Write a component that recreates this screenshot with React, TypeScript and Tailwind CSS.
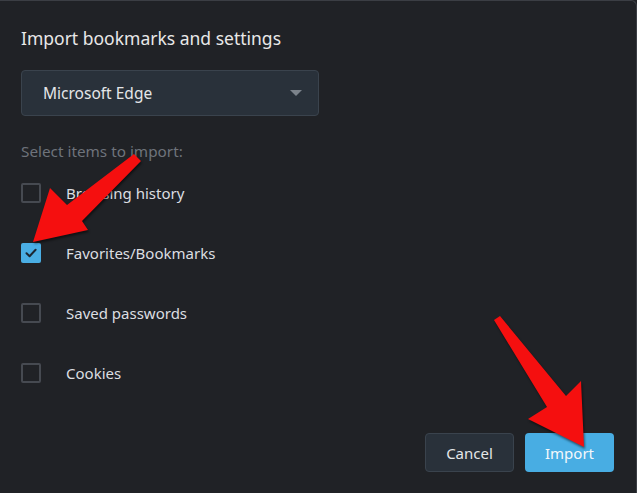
import React from "react";

const items = [
  { label: "Browsing history", checked: false },
  { label: "Favorites/Bookmarks", checked: true },
  { label: "Saved passwords", checked: false },
  { label: "Cookies", checked: false },
];

function Checkbox({ checked }: { checked: boolean }) {
  if (checked) {
    return (
      <div className="w-[20px] h-[20px] rounded-[2px] bg-[#4aaee4] flex items-center justify-center">
        <svg width="14" height="14" viewBox="0 0 14 14">
          <path d="M2.5 7.2 L5.6 10.2 L11.6 3.8" fill="none" stroke="#1c2733" strokeWidth="2" strokeLinecap="round" strokeLinejoin="round" />
        </svg>
      </div>
    );
  }
  return <div className="w-[20px] h-[20px] rounded-[2px] border-2 border-[#464a51]" />;
}

export default function App() {
  return (
    <div
      className="relative w-[637px] h-[493px] overflow-hidden bg-[#202226]"
      style={{ fontFamily: '"Noto Sans", "Open Sans", sans-serif' }}
    >
      <div className="absolute inset-0 border-t border-r border-[#3b3e44] rounded-tr-[6px] pointer-events-none" />
      <div className="flex flex-col h-full pl-[21px] pr-[23px] pb-[21px]">
        <div className="mt-[26px] h-[24px] leading-[24px] text-[17.5px] text-[#e8e8e8]">
          Import bookmarks and settings
        </div>
        <div className="mt-[20px] w-[298px] h-[46px] rounded-[4px] border border-[#3a434d] bg-[#29313a] flex items-center justify-between pl-[21px] pr-[16px]">
          <span className="text-[15.5px] text-[#e4e6e8] relative top-[1px]">Microsoft Edge</span>
          <svg width="12" height="6" viewBox="0 0 12 6">
            <path d="M0 0 L12 0 L6 6 Z" fill="#7c838b" />
          </svg>
        </div>
        <div className="mt-[25px] h-[20px] leading-[20px] text-[15.3px] text-[#6e737b]">
          Select items to import:
        </div>
        <div className="mt-[2px] flex flex-col">
          {items.map((it) => (
            <div key={it.label} className="h-[60px] flex items-center gap-[25px]">
              <Checkbox checked={it.checked} />
              <span className="text-[15px] text-[#dcdee1]">{it.label}</span>
            </div>
          ))}
        </div>
        <div className="mt-auto flex justify-end gap-[11px]">
          <button className="w-[89px] h-[39px] rounded-[4px] border border-[#3a434d] bg-[#29313a] text-[15px] text-[#e4e6e8] pt-[2px]">
            Cancel
          </button>
          <button className="w-[89px] h-[39px] rounded-[4px] bg-[#48ade3] text-[15px] text-[#f4f8fb] pt-[2px]">
            Import
          </button>
        </div>
      </div>
      <svg
        className="absolute inset-0 pointer-events-none"
        width="637"
        height="493"
        viewBox="0 0 637 493"
        style={{ filter: "drop-shadow(1px 2px 1px rgba(0,0,0,0.5))" }}
      >
        <polygon
          points="134,154 141,161 82,221 88,230 33,242 50,188 67,205"
          fill="#f50f0f"
        />
        <polygon
          points="494,320 500,316 566,396 581,381 584,447 528,419 547,407"
          fill="#f50f0f"
        />
      </svg>
    </div>
  );
}
